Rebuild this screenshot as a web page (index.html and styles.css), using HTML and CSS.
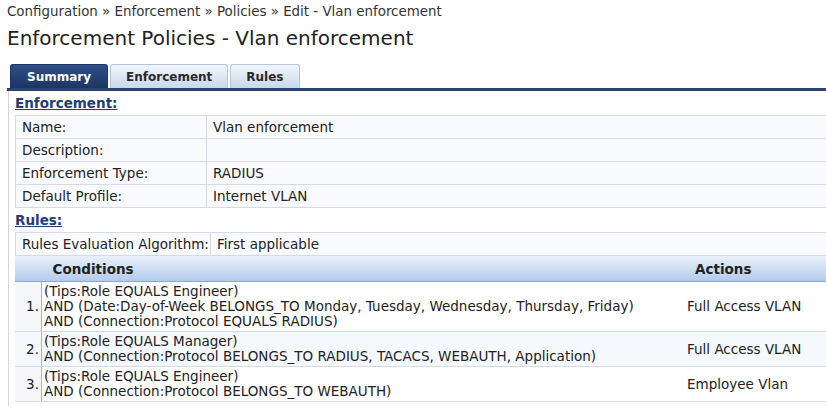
FILE: index.html
```html
<!DOCTYPE html>
<html lang="en">
<head>
    <meta charset="UTF-8">
    <title>Enforcement Policies - Vlan enforcement</title>
    <link rel="stylesheet" href="styles.css">
</head>
<body>
    <div class="breadcrumb">Configuration &raquo; Enforcement &raquo; Policies &raquo; Edit - Vlan enforcement</div>
    <h1>Enforcement Policies - Vlan enforcement</h1>

    <div class="tabs">
        <div class="tab active">Summary</div>
        <div class="tab">Enforcement</div>
        <div class="tab">Rules</div>
    </div>

    <div class="panel">
        <a href="#" class="section">Enforcement:</a>
        <table class="props">
            <tr><td class="label">Name:</td><td>Vlan enforcement</td></tr>
            <tr><td class="label">Description:</td><td></td></tr>
            <tr><td class="label">Enforcement Type:</td><td>RADIUS</td></tr>
            <tr><td class="label">Default Profile:</td><td>Internet VLAN</td></tr>
        </table>

        <a href="#" class="section">Rules:</a>
        <table class="props algo">
            <tr><td class="label">Rules Evaluation Algorithm:</td><td>First applicable</td></tr>
        </table>

        <table class="rules">
            <tr>
                <th class="num"></th>
                <th class="cond">Conditions</th>
                <th class="act">Actions</th>
            </tr>
            <tr>
                <td class="num">1.</td>
                <td>(Tips:Role EQUALS Engineer)<br>AND (Date:Day-of-Week BELONGS_TO Monday, Tuesday, Wednesday, Thursday, Friday)<br>AND (Connection:Protocol EQUALS RADIUS)</td>
                <td class="act">Full Access VLAN</td>
            </tr>
            <tr class="alt">
                <td class="num">2.</td>
                <td>(Tips:Role EQUALS Manager)<br>AND (Connection:Protocol BELONGS_TO RADIUS, TACACS, WEBAUTH, Application)</td>
                <td class="act">Full Access VLAN</td>
            </tr>
            <tr>
                <td class="num">3.</td>
                <td>(Tips:Role EQUALS Engineer)<br>AND (Connection:Protocol BELONGS_TO WEBAUTH)</td>
                <td class="act">Employee Vlan</td>
            </tr>
        </table>
    </div>
</body>
</html>
```

FILE: styles.css
```css
body {
    margin: 0;
    padding: 0 0 0 7px;
    font-family: 'DejaVu Sans', Verdana, sans-serif;
    font-size: 13.5px;
    color: #222;
    background-color: #fff;
    overflow: hidden;
}
.breadcrumb {
    font-size: 13.4px;
    color: #333;
    padding-top: 3px;
    line-height: 17px;
    height: 17px;
}
h1 {
    margin: 0;
    font-size: 20px;
    font-weight: normal;
    color: #222;
    height: 44px;
    line-height: 36px;
}
.tabs {
    display: flex;
    gap: 2px;
    padding-left: 3px;
    height: 24px;
    border-bottom: 3px solid #2b4374;
}
.tab {
    padding: 0 15px;
    line-height: 25px;
    font-weight: bold;
    font-size: 12px;
    color: #2a2a2a;
    background: linear-gradient(#f2f6fc, #c8d8ee);
    border: 1px solid #b6c4da;
    border-bottom: none;
    border-radius: 3px 3px 0 0;
}
.tab.active {
    padding: 0 16px;
    color: #fff;
    background: linear-gradient(#2f4f86, #1b3566);
    border-color: #1b3566;
}
.panel {
    margin-left: 1px;
    border-left: 1px solid #d3d6de;
    padding: 0 0 4px 6px;
}
.section {
    display: block;
    color: #243a7c;
    font-weight: bold;
    font-size: 13.5px;
    line-height: 25px;
    height: 24px;
}
table {
    border-collapse: collapse;
    width: 815px;
}
.props td {
    height: 22px;
    padding: 0 6px;
    background-color: #f9fafd;
    border: 1px solid #d6dae4;
    color: #222;
}
.props td.label {
    width: 178px;
}
.algo td.label {
    width: 187px;
    padding-right: 1px;
}
.rules th {
    height: 25px;
    text-align: left;
    font-weight: bold;
    color: #222;
    background: linear-gradient(#e9f1fb, #b3cbeb);
    border-bottom: 1px solid #8ea7cc;
    padding: 0;
}
.rules th.cond {
    padding-left: 11px;
}
.rules td {
    border-top: 1px solid #d6dae4;
    border-bottom: 1px solid #d6dae4;
    padding: 2px 2px;
    line-height: 15px;
    background-color: #fff;
    vertical-align: middle;
}
.rules tr.alt td {
    background-color: #f5f8fc;
}
.rules td.num,
.rules th.num {
    width: 22px;
    text-align: right;
    padding-right: 2px;
    border-right: 1px solid #a8b4c6;
    background-color: #f5f6f9;
}
.rules th.num {
    border-right: none;
    background: linear-gradient(#e9f1fb, #b3cbeb);
}
.rules td.act,
.rules th.act {
    width: 135px;
    padding-left: 9px;
}
.rules th.act {
    padding-left: 17px;
}
```
